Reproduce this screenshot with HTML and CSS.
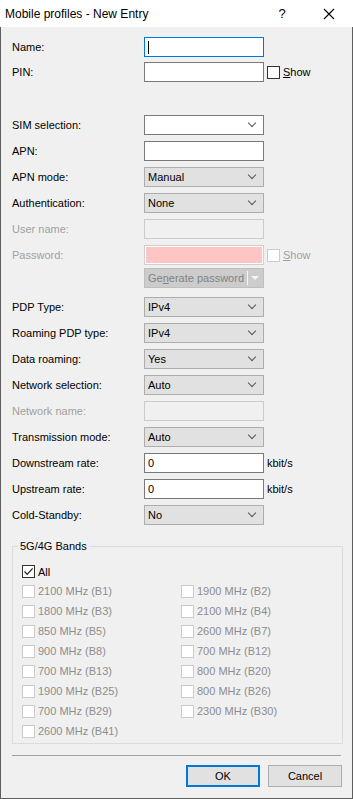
FILE: index.html
```html
<!DOCTYPE html>
<html lang="en">
<head>
    <meta charset="UTF-8">
    <meta name="viewport" content="width=device-width, initial-scale=1.0">
    <title>Mobile profiles - New Entry</title>
    <link rel="stylesheet" href="styles.css">
</head>
<body>
    <div class="window">
        <!-- Barra de titulo -->
        <div class="titlebar">
            <span class="title">Mobile profiles - New Entry</span>
            <span class="help">?</span>
            <span class="close">
                <svg width="12" height="12" viewBox="0 0 12 12"><path d="M1 1 L11 11 M11 1 L1 11" stroke="#000" stroke-width="1.1" fill="none"/></svg>
            </span>
        </div>

        <div class="dialog">
            <div class="form">
                <div class="row">
                    <label>Name:</label>
                    <div class="input focus"><span class="caret"></span></div>
                </div>
                <div class="row pin">
                    <label>PIN:</label>
                    <div class="input"></div>
                    <span class="check"></span><span class="after"><u>S</u>how</span>
                </div>

                <div class="row big">
                    <label>SIM selection:</label>
                    <div class="combo white"><span></span><i class="chev"></i></div>
                </div>
                <div class="row">
                    <label>APN:</label>
                    <div class="input"></div>
                </div>
                <div class="row">
                    <label>APN mode:</label>
                    <div class="combo"><span>Manual</span><i class="chev"></i></div>
                </div>
                <div class="row">
                    <label>Authentication:</label>
                    <div class="combo"><span>None</span><i class="chev"></i></div>
                </div>
                <div class="row">
                    <label class="off">User name:</label>
                    <div class="input disabled"></div>
                </div>
                <div class="row">
                    <label class="off">Password:</label>
                    <div class="input pink"></div>
                    <span class="check off"></span><span class="after off"><u>S</u>how</span>
                </div>
                <div class="row gen">
                    <label></label>
                    <div class="split">
                        <span class="split-text">Ge<u>n</u>erate password</span>
                        <span class="split-arrow"></span>
                    </div>
                </div>

                <div class="row after-gen">
                    <label>PDP Type:</label>
                    <div class="combo"><span>IPv4</span><i class="chev"></i></div>
                </div>
                <div class="row">
                    <label>Roaming PDP type:</label>
                    <div class="combo"><span>IPv4</span><i class="chev"></i></div>
                </div>
                <div class="row">
                    <label>Data roaming:</label>
                    <div class="combo"><span>Yes</span><i class="chev"></i></div>
                </div>
                <div class="row">
                    <label>Network selection:</label>
                    <div class="combo"><span>Auto</span><i class="chev"></i></div>
                </div>
                <div class="row">
                    <label class="off">Network name:</label>
                    <div class="input disabled"></div>
                </div>
                <div class="row">
                    <label>Transmission mode:</label>
                    <div class="combo"><span>Auto</span><i class="chev"></i></div>
                </div>
                <div class="row">
                    <label>Downstream rate:</label>
                    <div class="input"><span>0</span></div>
                    <span class="unit">kbit/s</span>
                </div>
                <div class="row">
                    <label>Upstream rate:</label>
                    <div class="input"><span>0</span></div>
                    <span class="unit">kbit/s</span>
                </div>
                <div class="row">
                    <label>Cold-Standby:</label>
                    <div class="combo"><span>No</span><i class="chev"></i></div>
                </div>
            </div>

            <!-- Bandas -->
            <fieldset class="bands">
                <legend>5G/4G Bands</legend>
                <div class="band-all">
                    <span class="check on">
                        <svg width="11" height="11" viewBox="0 0 11 11"><path d="M1.5 5.5 L4.2 8.3 L9.6 2.4" stroke="#222" stroke-width="1.2" fill="none"/></svg>
                    </span>
                    <span class="band-text">All</span>
                </div>
                <div class="band-grid">
                    <div class="band"><span class="check off"></span><span>2100 MHz (B1)</span></div>
                    <div class="band"><span class="check off"></span><span>1900 MHz (B2)</span></div>
                    <div class="band"><span class="check off"></span><span>1800 MHz (B3)</span></div>
                    <div class="band"><span class="check off"></span><span>2100 MHz (B4)</span></div>
                    <div class="band"><span class="check off"></span><span>850 MHz (B5)</span></div>
                    <div class="band"><span class="check off"></span><span>2600 MHz (B7)</span></div>
                    <div class="band"><span class="check off"></span><span>900 MHz (B8)</span></div>
                    <div class="band"><span class="check off"></span><span>700 MHz (B12)</span></div>
                    <div class="band"><span class="check off"></span><span>700 MHz (B13)</span></div>
                    <div class="band"><span class="check off"></span><span>800 MHz (B20)</span></div>
                    <div class="band"><span class="check off"></span><span>1900 MHz (B25)</span></div>
                    <div class="band"><span class="check off"></span><span>800 MHz (B26)</span></div>
                    <div class="band"><span class="check off"></span><span>700 MHz (B29)</span></div>
                    <div class="band"><span class="check off"></span><span>2300 MHz (B30)</span></div>
                    <div class="band"><span class="check off"></span><span>2600 MHz (B41)</span></div>
                </div>
            </fieldset>

            <div class="separator"></div>

            <div class="buttons">
                <button class="btn default">OK</button>
                <button class="btn">Cancel</button>
            </div>
        </div>
    </div>
</body>
</html>
```

FILE: styles.css
```css
body {
    margin: 0;
    font-family: "Liberation Sans", Arial, sans-serif;
    font-size: 11px;
    color: #000;
    background: #fff;
}

.window {
    width: 353px;
    height: 799px;
    box-sizing: border-box;
    background-color: #f0f0f0;
    border: 1px solid #5e5e5e;
    border-top: none;
    display: flex;
    flex-direction: column;
}

/* Barra de titulo */
.titlebar {
    height: 27px;
    flex-shrink: 0;
    background-color: #fff;
    display: flex;
    align-items: center;
    margin: 0 -1px;
    padding-left: 5px;
    font-size: 12px;
}

.title {
    flex: 1;
}

.help {
    width: 14px;
    margin-right: 34px;
    font-size: 13px;
    text-align: center;
}

.close {
    display: flex;
    width: 12px;
    margin-right: 18px;
}

.dialog {
    padding: 10px 10px 0 11px;
}

/* Filas del formulario */
.row {
    display: flex;
    align-items: center;
    height: 20px;
    margin-top: 6px;
}

.row:first-child {
    margin-top: 0;
}

.row.pin {
    margin-top: 5px;
}

.row.big {
    margin-top: 33px;
}

.row.gen {
    margin-top: 3px;
}

.row.after-gen {
    margin-top: 9px;
}

.row label {
    width: 132px;
    flex-shrink: 0;
}

.off {
    color: #a0a0a0;
}

.input,
.combo {
    width: 120px;
    height: 20px;
    box-sizing: border-box;
    flex-shrink: 0;
    border: 1px solid #7a7a7a;
    background-color: #fff;
    display: flex;
    align-items: center;
    padding-left: 3px;
}

.input.focus {
    border-color: #0078d7;
}

.caret {
    width: 1px;
    height: 13px;
    background-color: #000;
}

.input.disabled {
    background-color: #f0f0f0;
    border-color: #cccccc;
}

.input.pink {
    background-color: #ffc4c4;
    border-color: #cfcfcf;
    box-shadow: inset 0 0 0 1px #fff;
}

.combo {
    background-color: #e1e1e1;
    border-color: #adadad;
}

.combo.white {
    background-color: #fff;
    border-color: #7a7a7a;
}

.combo span {
    flex: 1;
}

.chev {
    width: 5px;
    height: 5px;
    border-right: 1px solid #555;
    border-bottom: 1px solid #555;
    transform: rotate(45deg);
    margin: 0 8px 4px 0;
}

.unit {
    margin-left: 3px;
}

/* Casillas */
.check {
    width: 13px;
    height: 13px;
    box-sizing: border-box;
    flex-shrink: 0;
    border: 1px solid #333;
    background-color: #fff;
    display: flex;
    align-items: center;
    justify-content: center;
}

.row .check {
    margin-left: 3px;
}

.check.off {
    border-color: #cccccc;
}

.after {
    margin-left: 3px;
}

/* Boton dividido deshabilitado */
.split {
    width: 120px;
    height: 20px;
    box-sizing: border-box;
    border: 1px solid #bfbfbf;
    background-color: #cccccc;
    color: #838383;
    display: flex;
    align-items: center;
}

.split-text {
    flex: 1;
    padding-left: 3px;
    font-size: 11px;
    white-space: nowrap;
    border-right: 1px solid #f4f4f4;
    height: 14px;
    line-height: 14px;
}

.split-arrow {
    width: 0;
    height: 0;
    margin: 0 4px 0 3px;
    border-left: 4px solid transparent;
    border-right: 4px solid transparent;
    border-top: 4px solid #f4f4f4;
}

/* Grupo de bandas */
.bands {
    width: 331px;
    box-sizing: border-box;
    margin: 15px 0 0;
    padding: 9px 0 2px 9px;
    border: 1px solid #dcdcdc;
}

.bands legend {
    padding: 0 2px;
    margin-left: -4px;
    line-height: 13px;
}

.band-all {
    display: flex;
    align-items: center;
    height: 19px;
}

.band-text {
    margin-left: 3px;
}

.band-grid {
    display: grid;
    grid-template-columns: 159px 1fr;
}

.band {
    display: flex;
    align-items: center;
    gap: 3px;
    height: 20px;
    color: #8d8d8d;
    font-size: 11px;
    white-space: nowrap;
}

.separator {
    height: 1px;
    width: 329px;
    margin-top: 11px;
    background-color: #a0a0a0;
}

.buttons {
    display: flex;
    justify-content: flex-end;
    gap: 8px;
    margin-top: 9px;
    width: 330px;
}

.btn {
    width: 74px;
    height: 22px;
    font-family: "Liberation Sans", Arial, sans-serif;
    font-size: 11px;
    background-color: #e1e1e1;
    border: 1px solid #adadad;
    padding: 0;
    color: #000;
}

.btn.default {
    border: 2px solid #0078d7;
}
```
